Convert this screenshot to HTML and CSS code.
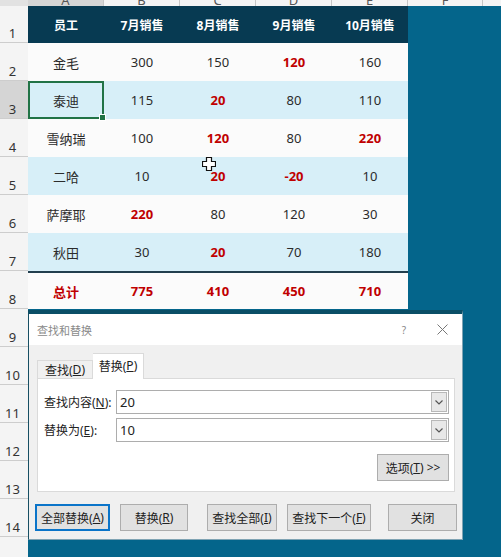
FILE: index.html
```html
<!DOCTYPE html>
<html lang="zh-CN">
<head>
<meta charset="utf-8">
<title>查找和替换</title>
<link rel="stylesheet" href="styles.css">
</head>
<body>
<div class="app">
  <div class="rowhdr">
    <div class="corner"></div>
    <div class="rh r1">1</div>
    <div class="rh">2</div>
    <div class="rh sel">3</div>
    <div class="rh">4</div>
    <div class="rh">5</div>
    <div class="rh">6</div>
    <div class="rh">7</div>
    <div class="rh">8</div>
    <div class="rh">9</div>
    <div class="rh">10</div>
    <div class="rh">11</div>
    <div class="rh">12</div>
    <div class="rh">13</div>
    <div class="rh">14</div>
    <div class="rh"></div>
  </div>
  <div class="main">
    <div class="colhdr">
      <div class="ch sel"><span>A</span></div>
      <div class="ch"><span>B</span></div>
      <div class="ch"><span>C</span></div>
      <div class="ch"><span>D</span></div>
      <div class="ch"><span>E</span></div>
      <div class="ch f"><span>F</span></div>
      <div class="ch g"></div>
    </div>
    <div class="grid">
      <div class="row head"><div>员工</div><div>7月销售</div><div>8月销售</div><div>9月销售</div><div>10月销售</div></div>
      <div class="row w"><div>金毛</div><div>300</div><div>150</div><div class="red">120</div><div>160</div></div>
      <div class="row b"><div class="active">泰迪</div><div>115</div><div class="red">20</div><div>80</div><div>110</div></div>
      <div class="row w"><div>雪纳瑞</div><div>100</div><div class="red">120</div><div>80</div><div class="red">220</div></div>
      <div class="row b"><div>二哈</div><div>10</div><div class="red">20</div><div class="red">-20</div><div>10</div></div>
      <div class="row w"><div>萨摩耶</div><div class="red">220</div><div>80</div><div>120</div><div>30</div></div>
      <div class="row b"><div>秋田</div><div>30</div><div class="red">20</div><div>70</div><div>180</div></div>
      <div class="row w total"><div>总计</div><div>775</div><div>410</div><div>450</div><div>710</div></div>
    </div>
  </div>

  <svg class="cursor" width="14" height="14" viewBox="0 0 14 14">
    <path d="M4.5 0.5 H9.5 V4.5 H13.5 V9.5 H9.5 V13.5 H4.5 V9.5 H0.5 V4.5 H4.5 Z" fill="#fff" stroke="#111" stroke-width="1.2"/>
  </svg>

  <div class="dialog">
    <div class="titlebar">
      <span class="title">查找和替换</span>
      <span class="help">?</span>
      <svg class="close" width="11" height="11" viewBox="0 0 11 11"><path d="M0.5 0.5 L10.5 10.5 M10.5 0.5 L0.5 10.5" stroke="#777" stroke-width="1"/></svg>
    </div>
    <div class="dbody">
      <div class="tabs">
        <div class="tab">查找(<u>D</u>)</div>
        <div class="tab on">替换(<u>P</u>)</div>
      </div>
      <div class="panel">
        <div class="frow">
          <label class="lbl">查找内容(<u>N</u>):</label>
          <div class="combo"><span class="val">20</span><span class="drop"><svg width="8" height="5" viewBox="0 0 8 5"><path d="M0.5 0.5 L4 4 L7.5 0.5" fill="none" stroke="#555" stroke-width="1.2"/></svg></span></div>
        </div>
        <div class="frow">
          <label class="lbl">替换为(<u>E</u>):</label>
          <div class="combo"><span class="val">10</span><span class="drop"><svg width="8" height="5" viewBox="0 0 8 5"><path d="M0.5 0.5 L4 4 L7.5 0.5" fill="none" stroke="#555" stroke-width="1.2"/></svg></span></div>
        </div>
        <div class="optrow">
          <button class="btn opt">选项(<u>T</u>) &gt;&gt;</button>
        </div>
      </div>
      <div class="btnrow">
        <button class="btn b1 primary">全部替换(<u>A</u>)</button>
        <button class="btn b2">替换(<u>R</u>)</button>
        <button class="btn b3">查找全部(<u>I</u>)</button>
        <button class="btn b4">查找下一个(<u>F</u>)</button>
        <button class="btn b5">关闭</button>
      </div>
    </div>
  </div>
</div>
</body>
</html>
```

FILE: styles.css
```css
html, body {
  margin: 0;
  padding: 0;
  background: #04658b;
}

.app {
  position: relative;
  width: 501px;
  height: 557px;
  display: flex;
  overflow: hidden;
  background: #04658b;
  font-family: "Noto Sans", "Noto Sans CJK SC", sans-serif;
}

/* row headers */
.rowhdr {
  width: 28px;
  flex: none;
  display: flex;
  flex-direction: column;
  background: #f4f4f4;
}

.corner {
  height: 6px;
  flex: none;
  background: #e2e2e2;
}

.rh {
  height: 38px;
  flex: none;
  box-sizing: border-box;
  border-bottom: 1px solid #cdcdcd;
  display: flex;
  align-items: flex-end;
  justify-content: center;
  padding: 0 3px 2px 0;
  font-size: 13px;
  line-height: 1;
  color: #333;
}

.rh.r1 {
  height: 37px;
}

.rh.sel {
  background: #d5d5d5;
}

/* main sheet */
.main {
  flex: 1;
  display: flex;
  flex-direction: column;
}

.colhdr {
  height: 6px;
  flex: none;
  display: flex;
  overflow: hidden;
  background: #f4f4f4;
}

.ch {
  width: 76px;
  flex: none;
  box-sizing: border-box;
  border-right: 1px solid #c6c6c6;
  text-align: center;
  font-size: 13px;
  color: #555;
}

.ch span {
  display: block;
  line-height: 12px;
  margin-top: -6px;
}

.ch.sel {
  background: #d5d5d5;
}

.ch.f {
  width: 75px;
}

.ch.g {
  flex: 1;
  border-right: none;
}

.grid {
  width: 380px;
}

.row {
  display: flex;
  align-items: center;
  height: 38px;
  box-sizing: border-box;
  font-size: 13px;
  color: #2b2b2b;
}

.row > div {
  width: 76px;
  height: 100%;
  display: flex;
  align-items: center;
  justify-content: center;
  box-sizing: border-box;
}

.row.head {
  height: 37px;
  background: #073a52;
  color: #fff;
  font-weight: bold;
  font-size: 12px;
}

.row.w {
  background: #fbfbfb;
}

.row.b {
  background: #d7eff8;
}

.row.total {
  border-top: 2px solid #223f4e;
  color: #c00000;
  font-weight: bold;
}

.red {
  color: #c00000;
  font-weight: bold;
}

.active {
  position: relative;
  border: 2px solid #217346;
}

.active::after {
  content: "";
  position: absolute;
  right: -4px;
  bottom: -4px;
  width: 5px;
  height: 5px;
  background: #217346;
  border: 1px solid #fff;
}

.cursor {
  position: absolute;
  left: 202px;
  top: 157px;
}

/* dialog */
.dialog {
  position: absolute;
  left: 28px;
  top: 310px;
  width: 435px;
  height: 230px;
  box-sizing: border-box;
  border-top: 4px solid #0a4e66;
  border-left: 1px solid #174f63;
  border-right: 1px solid #7fa3b3;
  border-bottom: 1px solid #7fa3b3;
  background: #f0f0f0;
  display: flex;
  flex-direction: column;
  font-size: 12px;
  color: #222;
}

.titlebar {
  height: 31px;
  flex: none;
  background: #fff;
  display: flex;
  align-items: center;
  padding: 0 0 0 8px;
}

.title {
  flex: 1;
  font-size: 11px;
  color: #8a8a8a;
}

.help {
  font-size: 10px;
  color: #888;
  margin-right: 31px;
}

.close {
  margin-right: 14px;
}

.dbody {
  flex: 1;
  display: flex;
  flex-direction: column;
  padding-top: 8px;
}

.tabs {
  display: flex;
  align-items: flex-end;
  height: 25px;
  margin-left: 8px;
}

.tab {
  height: 18px;
  width: 56px;
  box-sizing: border-box;
  border: 1px solid #dadada;
  border-bottom: none;
  display: flex;
  align-items: center;
  justify-content: center;
  background: #f0f0f0;
}

.tab.on {
  height: 26px;
  width: 51px;
  background: #fff;
  border-left: none;
  margin-bottom: -1px;
  position: relative;
  z-index: 1;
  padding-bottom: 2px;
}

.panel {
  margin: 0 7px 0 8px;
  height: 114px;
  box-sizing: border-box;
  background: #fff;
  border: 1px solid #dadada;
  padding: 11px 5px 0 6px;
  display: flex;
  flex-direction: column;
}

.frow {
  display: flex;
  align-items: center;
  height: 24px;
  margin-bottom: 4px;
}

.lbl {
  width: 72px;
  flex: none;
}

.combo {
  flex: 1;
  height: 24px;
  box-sizing: border-box;
  border: 1px solid #adadad;
  display: flex;
  align-items: center;
  background: #fff;
}

.val {
  flex: 1;
  padding-left: 3px;
  font-size: 13px;
}

.drop {
  width: 16px;
  height: 20px;
  margin-right: 1px;
  box-sizing: border-box;
  border: 1px solid #b8b8b8;
  background: #e8e8e8;
  display: flex;
  align-items: center;
  justify-content: center;
}

.optrow {
  display: flex;
  justify-content: flex-end;
  margin-top: 8px;
}

.btn {
  height: 27px;
  box-sizing: border-box;
  border: 1px solid #adadad;
  background: #e1e1e1;
  font-family: "Noto Sans", "Noto Sans CJK SC", sans-serif;
  font-size: 12px;
  color: #222;
  padding: 0;
  display: flex;
  align-items: center;
  justify-content: center;
}

.btn.opt {
  width: 72px;
}

.btnrow {
  display: flex;
  margin-top: 12px;
  padding-left: 6px;
}

.btn.primary {
  border: 2px solid #0a74c9;
}

.b1 { width: 75px; }
.b2 { width: 68px; margin-left: 10px; }
.b3 { width: 70px; margin-left: 19px; }
.b4 { width: 84px; margin-left: 10px; }
.b5 { width: 69px; margin-left: 17px; }
```
